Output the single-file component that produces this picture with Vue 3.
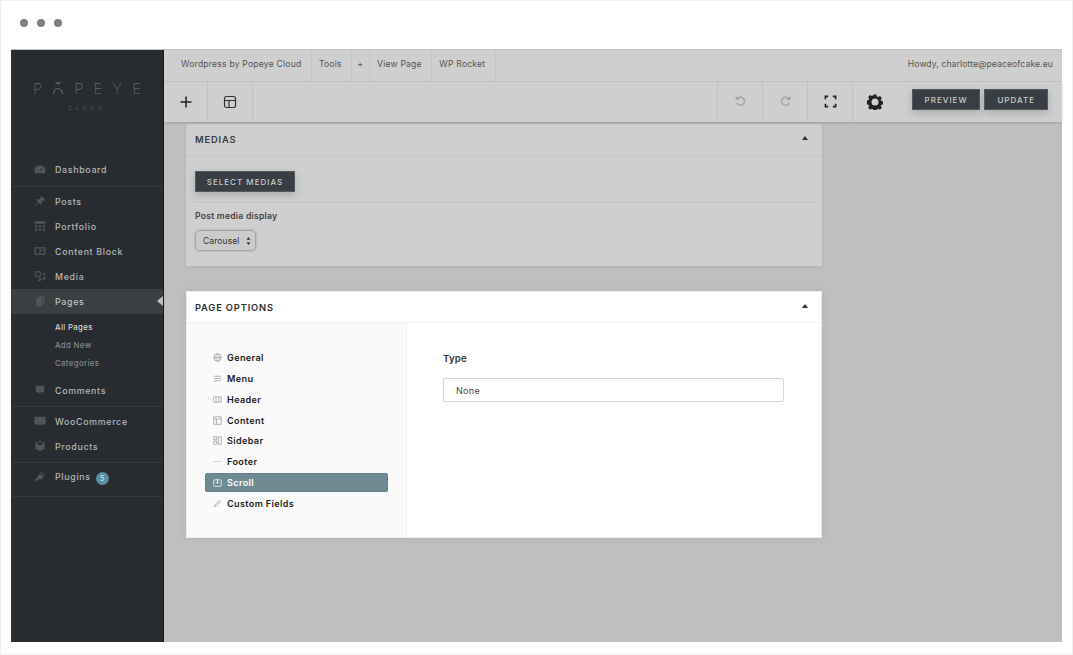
<template>
  <div class="page">
    <div class="dots"><i></i><i></i><i></i></div>
    <div class="window">
      <aside class="sidebar">
        <div class="logo">
          <div class="logo-name">
            <span>P</span>
            <svg class="logo-o" viewBox="0 0 12 14" width="12" height="14">
              <path d="M3.500 1l2.500 2 2.500-2M1.500 13a4.500 5.500 0 0 1 9 0" fill="none" stroke="#63686c" stroke-width="1.100" />
            </svg>
            <span>P</span><span>E</span><span>Y</span><span>E</span>
          </div>
          <div class="logo-sub">CLOUD</div>
        </div>
        <nav class="nav">
          <div v-for="group in nav" :key="group[0].label" class="nav-group">
            <div v-for="item in group" :key="item.label" class="nav-row" :class="{ active: item.active, sub: item.sub, cur: item.cur, last: item.last, tall: item.badge }">
              <svg v-if="!item.sub" class="nav-icon" viewBox="0 0 14 14" width="12" height="12">
                <path :d="item.icon" fill="#4f5559" fill-rule="evenodd" />
              </svg>
              <span>{{ item.label }}</span>
              <b v-if="item.badge" class="badge">{{ item.badge }}</b>
              <em v-if="item.active" class="notch"></em>
            </div>
          </div>
        </nav>
      </aside>

      <main class="main">
        <header class="adminbar">
          <a v-for="link in links" :key="link" class="adminlink">{{ link }}</a>
          <span class="howdy">Howdy, charlotte@peaceofcake.eu</span>
        </header>
        <div class="toolbar">
          <div class="tool tool-first">
            <svg viewBox="0 0 14 14" width="14" height="14"><path d="M7 1.500v11M1.500 7h11" stroke="#222" stroke-width="1.500" fill="none" /></svg>
          </div>
          <div class="tool">
            <svg viewBox="0 0 14 14" width="14" height="14" fill="none" stroke="#333" stroke-width="1.200"><rect x="1.500" y="1.500" width="11" height="11" rx="2" /><path d="M1.500 5.500h11M6 5.500v7" /></svg>
          </div>
          <div class="tool-space"></div>
          <div class="tool tool-l">
            <svg viewBox="0 0 14 14" width="13" height="13" fill="none" stroke="#a3a3a3" stroke-width="1.500"><path d="M3.500 4.200A4.300 4.300 0 1 1 3 8.500" /><path d="M2.500 1.500v3.200h3.200" /></svg>
          </div>
          <div class="tool tool-l">
            <svg viewBox="0 0 14 14" width="13" height="13" fill="none" stroke="#a3a3a3" stroke-width="1.500"><path d="M10.500 4.200A4.300 4.300 0 1 0 11 8.500" /><path d="M11.500 1.500v3.200H8.300" /></svg>
          </div>
          <div class="tool tool-l">
            <svg viewBox="0 0 14 14" width="13" height="13" fill="none" stroke="#222" stroke-width="1.800"><path d="M1.500 4.500v-3h3M9.500 1.500h3v3M12.500 9.500v3h-3M4.500 12.500h-3v-3" /></svg>
          </div>
          <div class="tool tool-l">
            <svg viewBox="0 0 16 16" width="16" height="16"><path fill="#222" fill-rule="evenodd" d="M6.600.5h2.800l.4 2 1.400.6 1.700-1.100 2 2-1.100 1.700.6 1.400 2 .4v2.800l-2 .4-.6 1.400 1.100 1.700-2 2-1.700-1.100-1.400.6-.4 2H6.600l-.4-2-1.400-.6-1.700 1.100-2-2 1.100-1.700-.6-1.400-2-.4V6.500l2-.4.6-1.400L1.100 3l2-2 1.700 1.100 1.400-.6zM8 4.500a3.500 3.500 0 1 0 0 7 3.500 3.500 0 0 0 0-7z" /></svg>
          </div>
          <div class="actions">
            <button class="dark-btn">PREVIEW</button>
            <button class="dark-btn">UPDATE</button>
          </div>
        </div>

        <div class="content">
          <section class="panel dim">
            <div class="panel-head">
              <span>MEDIAS</span><i class="caret"></i>
            </div>
            <div class="panel-body">
              <button class="dark-btn select-btn">SELECT MEDIAS</button>
              <hr class="rule" />
              <div class="field-label">Post media display</div>
              <div class="fake-select">
                <span>Carousel</span>
                <svg viewBox="0 0 6 10" width="5" height="8"><path d="M3 0l2.500 3.500h-5zM3 10L.5 6.500h5z" fill="#333" /></svg>
              </div>
            </div>
          </section>

          <section class="panel bright">
            <div class="panel-head">
              <span>PAGE OPTIONS</span><i class="caret"></i>
            </div>
            <div class="options">
              <ul class="tabs">
                <li v-for="tab in tabs" :key="tab.label" class="tab" :class="{ selected: tab.selected }">
                  <svg viewBox="0 0 12 12" width="9" height="9" fill="none" :stroke="tab.selected ? '#fff' : '#999'" stroke-width="1">
                    <path :d="tab.icon" />
                  </svg>
                  <span>{{ tab.label }}</span>
                </li>
              </ul>
              <div class="pane">
                <div class="pane-label">Type</div>
                <div class="pane-input">None</div>
              </div>
            </div>
          </section>
        </div>
      </main>
    </div>
  </div>
</template>

<script setup>
const icons = {
  dash: 'M7 2.500a6.500 6.500 0 0 0-6.500 6.500c0 1 .3 2 .8 3h11.400c.5-1 .8-2 .8-3A6.500 6.500 0 0 0 7 2.500zM6.500 9l2-3 .6.4L7.500 9.700z',
  pin: 'M8.500 1l4.500 4.500-1 .8-.8-.3-2.400 2.400.2 2.100-.9.9-2.300-2.300L1.500 13l-.5-.5 3.900-4.300L2.600 5.900l.9-.9 2.100.2L8 2.800l-.3-.8z',
  grid: 'M1 1.500h12v3H1zM1 6h3v2.500H1zM5.500 6h3v2.500h-3zM10 6h3v2.500h-3zM1 10h3v2.500H1zM5.500 10h3v2.500h-3zM10 10h3v2.500h-3z',
  block: 'M.5 2.500h13v9H.5zM7.500 4v2h4.500V4zM7.500 7v3h4.500V7zM2 4v6h4.500V4z',
  media: 'M1 1.500h7v6.500H1zM2.300 2.800v3.900h4.400V2.800zM10 3.500h3V10.500a1.500 1.300 0 1 1-1-1.200V5h-2zM5 9.500h3v2.500a1.500 1.300 0 1 1-1-1.200v-.3H5z',
  pages: 'M5 1h7v10h-1.500V2.500H5zM2.500 3.500h7V13h-7z',
  comment: 'M2 2h10v7.500H8L5.500 12V9.500H2z',
  woo: 'M.5 2h13v9H8.500L7 13 5.500 11H.5z',
  box: 'M7 .8l5.500 3v6.400L7 13.200l-5.500-3V3.800zM3 4.200L7 6.400l4-2.200L7 2z',
  plug: 'M9 2l1 1-2 2 1.500 1.500 2-2 1 1-2 2 .5 1-2.500 2.500-1.500-.4L2.500 13 1 11.500l2.900-2.400-.4-1.600L6 5l1 .5z',
}

const nav = [
  [{ label: 'Dashboard', icon: icons.dash, last: true }],
  [
    { label: 'Posts', icon: icons.pin },
    { label: 'Portfolio', icon: icons.grid },
    { label: 'Content Block', icon: icons.block },
    { label: 'Media', icon: icons.media },
    { label: 'Pages', icon: icons.pages, active: true },
    { label: 'All Pages', sub: true, cur: true },
    { label: 'Add New', sub: true },
    { label: 'Categories', sub: true },
    { label: 'Comments', icon: icons.comment, last: true },
  ],
  [
    { label: 'WooCommerce', icon: icons.woo },
    { label: 'Products', icon: icons.box, last: true },
  ],
  [{ label: 'Plugins', icon: icons.plug, badge: '5', last: true }],
]

const links = ['Wordpress by Popeye Cloud', 'Tools', '+', 'View Page', 'WP Rocket']

const tabs = [
  { label: 'General', icon: 'M6 1a5 5 0 1 0 0 10A5 5 0 0 0 6 1zM1 6h10M6 1c-3 3-3 7 0 10M6 1c3 3 3 7 0 10' },
  { label: 'Menu', icon: 'M1 3h10M1 6h10M1 9h10' },
  { label: 'Header', icon: 'M1.500 2.500h9a1 1 0 0 1 1 1v5a1 1 0 0 1-1 1h-9a1 1 0 0 1-1-1v-5a1 1 0 0 1 1-1zM4 2.500v7M8 2.500v7' },
  { label: 'Content', icon: 'M1 1h10v10H1zM1 4h10M4.500 4v7' },
  { label: 'Sidebar', icon: 'M1 1h4v4H1zM1 7h4v4H1zM7 1h4v10H7z' },
  { label: 'Footer', icon: 'M1 6h2M5 6h2M9 6h2' },
  { label: 'Scroll', icon: 'M2 2.500h8a1 1 0 0 1 1 1v6.500a1 1 0 0 1-1 1H2a1 1 0 0 1-1-1V3.500a1 1 0 0 1 1-1zM6 1v6M4 5.500L6 7.500l2-2', selected: true },
  { label: 'Custom Fields', icon: 'M8.500 2L10 3.500 4 9.500 1.800 10.200 2.500 8z' },
]
</script>

<style>
html, body { margin: 0; background: #fff; }
</style>

<style scoped>
.page {
  box-sizing: border-box;
  width: 1073px;
  height: 655px;
  padding: 0 10px 12px 11px;
  display: flex;
  flex-direction: column;
  background: #fff;
  border: 1px solid #efefef;
  font-family: Inter, "Liberation Sans", sans-serif;
}
.dots {
  height: 48px;
  flex: none;
  display: flex;
  gap: 9px;
  padding: 18px 0 0 8px;
  box-sizing: border-box;
}
.dots i { width: 8px; height: 8px; border-radius: 50%; background: #808080; }
.window { flex: 1; display: flex; min-height: 0; border-top: 1px solid #c4c4c4; margin-left: -1px; }

.sidebar {
  width: 153px;
  box-sizing: border-box;
  flex: none;
  background: #282c30;
  border-right: 1px solid #16181a;
}
.logo { height: 107px; box-sizing: border-box; padding-top: 31px; text-align: center; }
.logo-name {
  display: flex;
  justify-content: center;
  align-items: center;
  gap: 10px;
  height: 14px;
  font-size: 15px;
  font-weight: 200;
  color: #63686c;
}
.logo-sub { margin-top: 10px; font-size: 5px; letter-spacing: 4px; color: #585d61; }
.nav-group { padding-top: 2px; }
.nav-group:first-child { padding-top: 0; }
.nav-group:last-child { padding-top: 1px; }
.nav-row {
  position: relative;
  height: 25px;
  display: flex;
  align-items: center;
  padding-left: 44px;
  font-size: 8.800px;
  font-weight: 500;
  letter-spacing: .7px;
  color: #b5b8ba;
}
.nav-icon { position: absolute; left: 23px; top: 6px; }
.nav-row.last { height: 29px; border-bottom: 1px solid #33373b; box-sizing: border-box; padding-bottom: 3px; }
.nav-group:first-child .nav-row.last { height: 30px; padding-bottom: 4px; }
.nav-row.tall { height: 33px; padding-bottom: 7px; }
.nav-row.active { background: #3a3f44; color: #c2c4c6; }
.nav-row.sub { height: 18px; font-size: 7.800px; letter-spacing: .35px; color: #83878a; }
.nav-row.cur { color: #d6d8d9; margin-top: 4px; }
.nav-row.sub + .nav-row:not(.sub) { margin-top: 6px; }
.notch {
  position: absolute;
  right: 0;
  top: 7px;
  width: 0;
  height: 0;
  border-top: 5.500px solid transparent;
  border-bottom: 5.500px solid transparent;
  border-right: 6px solid #bfbfbf;
}
.badge {
  width: 13px;
  height: 13px;
  margin: 3px 0 0 5px;
  border-radius: 50%;
  background: #5b8ea3;
  color: #d5e3e9;
  font-size: 7px;
  font-weight: 500;
  letter-spacing: 0;
  line-height: 13px;
  text-align: center;
}

.main { flex: 1; min-width: 0; background: #bfbfbf; display: flex; flex-direction: column; }
.adminbar {
  height: 32px;
  flex: none;
  display: flex;
  align-items: stretch;
  padding-left: 10px;
  box-sizing: border-box;
  background: #cfcfcf;
  border-bottom: 1px solid #c3c3c3;
  font-size: 8.600px;
  letter-spacing: .2px;
  color: #555;
}
.adminlink {
  display: flex;
  align-items: center;
  padding: 0 9.500px 4px 7px;
  border-right: 1px solid #c7c7c7;
}
.adminlink:nth-child(3) { padding-left: 5px; padding-right: 6px; }
.howdy { margin-left: auto; align-self: center; padding: 0 9px 4px 0; letter-spacing: .1px; }
.toolbar {
  height: 40px;
  flex: none;
  display: flex;
  background: #cfcfcf;
  box-shadow: 0 1px 2px rgba(0, 0, 0, .18);
  position: relative;
}
.tool {
  width: 44px;
  display: flex;
  align-items: center;
  justify-content: center;
  border-right: 1px solid #c1c1c1;
  padding-bottom: 1px;
}
.tool-first { width: 43px; }
.tool-space { flex: 1; }
.tool.tool-l { border-right: 0; border-left: 1px solid #c1c1c1; }
.actions { width: 165px; box-sizing: border-box; display: flex; gap: 4px; padding: 7px 14px 0 0; justify-content: flex-end; align-items: flex-start; }
.dark-btn {
  height: 21px;
  padding: 0 12px;
  border: 1px solid #54595d;
  background: #383e43;
  color: #c9cccd;
  font-family: inherit;
  font-size: 8px;
  font-weight: 500;
  letter-spacing: 1px;
  box-shadow: 0 3px 9px rgba(0, 0, 0, .18);
}

.content { flex: 1; padding: 2px 0 0 22px; }
.panel { width: 636px; box-sizing: border-box; }
.panel-head {
  height: 31px;
  display: flex;
  align-items: center;
  justify-content: space-between;
  padding: 0 14px 0 9px;
  font-size: 9.300px;
  font-weight: 600;
  letter-spacing: .85px;
}
.caret { width: 0; height: 0; border: 3.500px solid transparent; border-top: 0; border-bottom: 4.500px solid #333; margin-bottom: 3px; }
.dim { height: 142px; background: #cfcfcf; box-shadow: 0 1px 3px rgba(0, 0, 0, .08); }
.dim .panel-head { color: #3a3a3a; border-bottom: 1px solid #c6c6c6; }
.panel-body { padding: 15px 8px 0 9px; }
.select-btn { display: block; height: 21px; width: 100px; padding: 0; }
.rule { height: 0; margin: 10px 0 0; border: 0; border-top: 1px solid #c0c0c0; border-bottom: 1px solid #d5d5d5; }
.field-label { margin-top: 7px; font-size: 8.700px; font-weight: 600; letter-spacing: .2px; color: #444; line-height: 11px; }
.fake-select {
  width: 59px;
  height: 19px;
  margin: 9px 0 0 1px;
  padding: 0 4px 0 7px;
  box-sizing: border-box;
  display: flex;
  align-items: center;
  justify-content: space-between;
  border-radius: 4px;
  background: #cbcbcb;
  box-shadow: 0 0 2px 1px rgba(0, 0, 0, .28);
  font-size: 8.500px;
  letter-spacing: .1px;
  color: #333;
}
.bright {
  margin-top: 25px;
  height: 247px;
  background: #fff;
  border: 1px solid #ececec;
  display: flex;
  flex-direction: column;
  box-shadow: 0 0 8px rgba(0, 0, 0, .06);
}
.bright .panel-head { flex: none; height: 31px; box-sizing: border-box; color: #2c2c2c; border-bottom: 1px solid #f0f0f0; padding-left: 8px; padding-right: 13px; }
.options { flex: 1; display: flex; }
.tabs {
  width: 220px;
  box-sizing: border-box;
  margin: 0;
  padding: 24.600px 18px 0 18px;
  list-style: none;
  background: #fafafa;
  border-right: 1px solid #f0f0f0;
}
.tab {
  height: 20.700px;
  display: flex;
  align-items: center;
  gap: 5px;
  padding-left: 8px;
  box-sizing: border-box;
  font-size: 9.100px;
  font-weight: 600;
  letter-spacing: .35px;
  color: #1c1c1c;
}
.tab.selected {
  height: 19px;
  margin: 1px 0 1px;
  border: 1px solid #66808c;
  border-radius: 2px;
  background: #708a94;
  color: #fff;
  padding-left: 7px;
}
.pane { flex: 1; padding: 30px 37px 0 36px; }
.pane-label { font-size: 9.500px; font-weight: 600; letter-spacing: .3px; color: #333; line-height: 12px; }
.pane-input {
  width: 341px;
  height: 24px;
  box-sizing: border-box;
  margin-top: 13px;
  padding-left: 12px;
  border: 1px solid #d6d6d6;
  border-radius: 2px;
  font-size: 9px;
  letter-spacing: .3px;
  line-height: 23px;
  color: #444;
}
</style>
